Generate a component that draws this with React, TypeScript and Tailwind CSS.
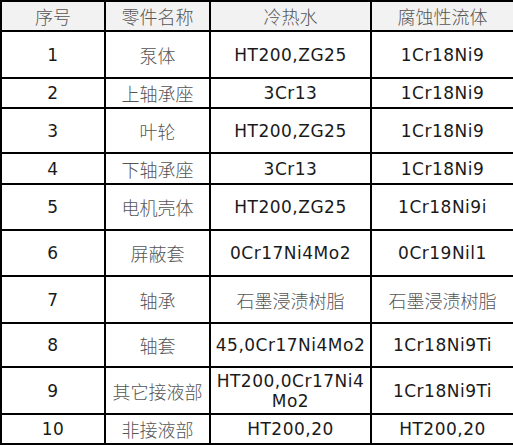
const latin = "font-['DejaVu_Sans',Verdana,sans-serif] text-[17px] tracking-[0.5px] text-[#1a1a1a]";
const cjk = "font-['Noto_Sans_CJK_SC',sans-serif] text-[18px] font-light text-[#555]";

type Cell = { text: React.ReactNode; cn?: boolean };

const rows: { h: string; cells: Cell[] }[] = [
  { h: "h-[47px]", cells: [{ text: "1" }, { text: "泵体", cn: true }, { text: "HT200,ZG25" }, { text: "1Cr18Ni9" }] },
  { h: "h-[30px]", cells: [{ text: "2" }, { text: "上轴承座", cn: true }, { text: "3Cr13" }, { text: "1Cr18Ni9" }] },
  { h: "h-[45px]", cells: [{ text: "3" }, { text: "叶轮", cn: true }, { text: "HT200,ZG25" }, { text: "1Cr18Ni9" }] },
  { h: "h-[31px]", cells: [{ text: "4" }, { text: "下轴承座", cn: true }, { text: "3Cr13" }, { text: "1Cr18Ni9" }] },
  { h: "h-[46px]", cells: [{ text: "5" }, { text: "电机壳体", cn: true }, { text: "HT200,ZG25" }, { text: "1Cr18Ni9i" }] },
  { h: "h-[46px]", cells: [{ text: "6" }, { text: "屏蔽套", cn: true }, { text: "0Cr17Ni4Mo2" }, { text: "0Cr19Nil1" }] },
  { h: "h-[47px]", cells: [{ text: "7" }, { text: "轴承", cn: true }, { text: "石墨浸渍树脂", cn: true }, { text: "石墨浸渍树脂", cn: true }] },
  { h: "h-[44px]", cells: [{ text: "8" }, { text: "轴套", cn: true }, { text: "45,0Cr17Ni4Mo2" }, { text: "1Cr18Ni9Ti" }] },
  {
    h: "h-[47px]",
    cells: [
      { text: "9" },
      { text: "其它接液部", cn: true },
      { text: <>HT200,0Cr17Ni4<br />Mo2</> },
      { text: "1Cr18Ni9Ti" },
    ],
  },
  { h: "h-[30px]", cells: [{ text: "10" }, { text: "非接液部", cn: true }, { text: "HT200,20" }, { text: "HT200,20" }] },
];

const headers = ["序号", "零件名称", "冷热水", "腐蚀性流体"];

export default function App() {
  return (
    <div className="w-[513px] h-[445px] bg-white">
      <table className="w-[513px] border-collapse table-fixed">
        <colgroup>
          <col className="w-[104px]" />
          <col className="w-[105px]" />
          <col className="w-[161px]" />
          <col className="w-[143px]" />
        </colgroup>
        <thead>
          <tr className="h-[30px] bg-[#f2f2f2]">
            {headers.map((t) => (
              <th key={t} className={`border-2 border-black p-0 text-center align-middle ${cjk} font-light`}>
                {t}
              </th>
            ))}
          </tr>
        </thead>
        <tbody>
          {rows.map((r, i) => (
            <tr key={i} className={r.h}>
              {r.cells.map((c, j) => (
                <td
                  key={j}
                  className={`border-2 border-black p-0 text-center align-middle leading-[20px] whitespace-nowrap ${c.cn ? cjk : latin}`}
                >
                  {c.text}
                </td>
              ))}
            </tr>
          ))}
        </tbody>
      </table>
    </div>
  );
}
